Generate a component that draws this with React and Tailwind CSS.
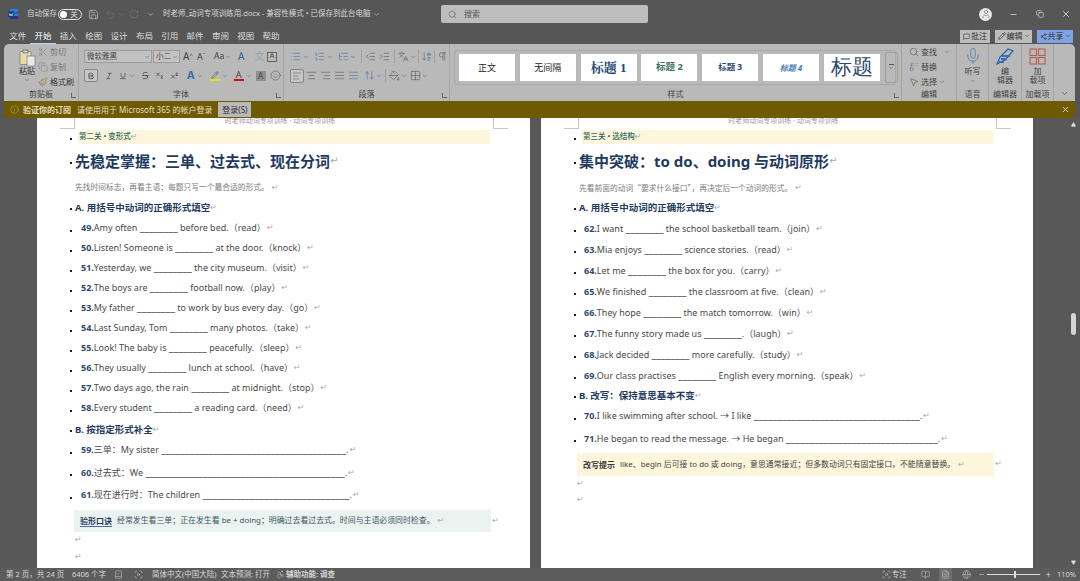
import React from "react";
import {
  Scissors, Copy, Paintbrush, Search, User, Minus, X, ChevronDown, Undo2, RotateCw, Save,
  Bold, Italic, Underline, Strikethrough, Subscript, Superscript, Smile, AlignLeft, AlignCenter, AlignRight,
  AlignJustify, List, ListOrdered, ListTree, IndentDecrease, IndentIncrease, Pilcrow, ArrowDownAZ, PaintBucket,
  Grid2x2, Replace, MousePointer2, Mic, MessageSquare, Pencil, Share2, Info, Triangle, BookOpen, FileText, Globe,
  Accessibility, Focus, ArrowUpDown, Languages, BookCheck,
} from "lucide-react";

const font = "font-['Noto_Sans','Noto_Sans_CJK_SC',sans-serif]";

const tabs = ["文件", "开始", "插入", "绘图", "设计", "布局", "引用", "邮件", "审阅", "视图", "帮助"];

const leftItems = [
  ["49.", "Amy often ________ before bed.（read）"],
  ["50.", "Listen! Someone is ________ at the door.（knock）"],
  ["51.", "Yesterday, we ________ the city museum.（visit）"],
  ["52.", "The boys are ________ football now.（play）"],
  ["53.", "My father ________ to work by bus every day.（go）"],
  ["54.", "Last Sunday, Tom ________ many photos.（take）"],
  ["55.", "Look! The baby is ________ peacefully.（sleep）"],
  ["56.", "They usually ________ lunch at school.（have）"],
  ["57.", "Two days ago, the rain ________ at midnight.（stop）"],
  ["58.", "Every student ________ a reading card.（need）"],
];

const rightItems = [
  ["62.", "I want ________ the school basketball team.（join）"],
  ["63.", "Mia enjoys ________ science stories.（read）"],
  ["64.", "Let me ________ the box for you.（carry）"],
  ["65.", "We finished ________ the classroom at five.（clean）"],
  ["66.", "They hope ________ the match tomorrow.（win）"],
  ["67.", "The funny story made us ________.（laugh）"],
  ["68.", "Jack decided ________ more carefully.（study）"],
  ["69.", "Our class practises ________ English every morning.（speak）"],
];

const Mark = ({ className = "" }) => (
  <span className={`text-[8px] leading-none text-[#a8a8a8] font-['DejaVu_Sans'] ${className}`}>↵</span>
);

const Bullet = ({ className = "" }) => <span className={`w-[2px] h-[2px] shrink-0 bg-[#222] ${className}`}></span>;

const Item = ({ n, text, h = "h-[20px]", ml }) => (
  <div className={`flex items-center ${h}`}>
    <Bullet className="mt-[5px]" />
    <span className={`${ml} text-[9px] font-bold text-[#2f4a6d]`}>{n}</span>
    <span className="text-[9px] text-[#4a4a4a] whitespace-pre">
      {text.split(/(_+)/).map((part, i) =>
        part.startsWith("_") ? <span key={i} className="text-[10.7px] leading-none">{part}</span> : part
      )}
    </span>
    <Mark className="ml-[1px]" />
  </div>
);

const Heading = ({ children, h }) => (
  <div className={`flex items-center ${h}`}>
    <Bullet className="mt-[2px] mr-[3px]" />
    <span className="text-[9.5px] font-bold text-[#1f3a5f]">{children}</span>
    <Mark />
  </div>
);

const PageTop = ({ band, title, sub, bandLeft }) => (
  <>
    <div className="flex h-[12px] justify-center">
      <span className="text-[7px] leading-[5px] text-[#999]">时老师动词专项训练 · 动词专项训练</span>
    </div>
    <div className="flex h-[14px] items-center">
      <Bullet className="mt-[4px]" />
      <div className={`h-full flex-1 flex items-center bg-[#fdf5dc] ${bandLeft}`}>
        <span className="text-[7.5px] font-medium text-[#2a6a60]">{band}</span>
        <Mark className="text-[6px]" />
      </div>
    </div>
    <div className="flex h-[34px] items-center">
      <Bullet className="mr-[3px] mt-[4px]" />
      <h1 className="text-[15px] font-bold text-[#1f3a5f]">{title}</h1>
      <Mark className="text-[10px]" />
    </div>
    <div className="flex h-[20px] items-center pl-[5px]">
      <span className="text-[7.75px] text-[#7a7a7a]">{sub}</span>
      <Mark className="ml-[3px]" />
    </div>
    <Heading h="h-[20px]">A. 用括号中动词的正确形式填空</Heading>
  </>
);

const Crop = ({ side, x }) => (
  <div className={`absolute top-0 h-[11px] w-[15px] border-b border-[#c8c8c8] ${side === "l" ? "border-r" : "border-l"} ${x}`}></div>
);

function LeftPage() {
  return (
    <div className="relative w-[493px] shrink-0 h-full bg-white pl-[33px] pr-[40px] overflow-hidden">
      <Crop side="l" x="left-[23px]" />
      <Crop side="r" x="left-[456px]" />
      <PageTop
        band="第二关 • 变形式"
        title="先稳定掌握：三单、过去式、现在分词"
        sub="先找时间标志，再看主语；每题只写一个最合适的形式。"
        bandLeft="ml-[6px] pl-[1px]"
      />
      {leftItems.map(([n, t]) => (
        <Item key={n} n={n} text={t} ml="ml-[9px]" />
      ))}
      <Heading h="h-[24px]">B. 按指定形式补全</Heading>
      <Item n="59." text="三单：My sister _______________________________________." h="h-[16px]" ml="ml-[9px]" />
      <Item n="60." text="过去式：We __________________________________________." h="h-[29px]" ml="ml-[9px]" />
      <Item n="61." text="现在进行时：The children _______________________________." h="h-[16px]" ml="ml-[9px]" />
      <div className="relative mt-[7px] ml-[4px] mr-[-1px] h-[22px] bg-[#eaf3ef] pl-[6px] flex items-center">
        <span className="text-[8px] font-bold text-[#1f3a5f] border-b border-[#4a6fa5] leading-[10px] mr-[5px]">验形口诀</span>
        <span className="text-[7.9px] text-[#3d5560]">经常发生看三单；正在发生看 be + doing；明确过去看过去式。时间与主语必须同时检查。</span>
        <Mark className="ml-[3px]" />
        <Mark className="absolute right-[-8px] top-[7px]" />
      </div>
      <div className="h-[16px] flex items-center pl-[5px]"><Mark /></div>
      <div className="h-[18px] flex items-center pl-[5px]"><Mark /></div>
    </div>
  );
}

function RightPage() {
  return (
    <div className="relative w-[492px] shrink-0 h-full bg-white pl-[33px] pr-[40px] overflow-hidden">
      <Crop side="l" x="left-[23px]" />
      <Crop side="r" x="left-[455px]" />
      <PageTop
        band="第三关 • 选结构"
        title="集中突破：to do、doing 与动词原形"
        sub={
          <>
            先看前面的动词<span className="font-['Noto_Sans_CJK_SC']">“</span>要求什么接口<span className="font-['Noto_Sans_CJK_SC']">”</span>，再决定后一个动词的形式。
          </>
        }
        bandLeft="ml-[6px] pl-[1px]"
      />
      {rightItems.map(([n, t]) => (
        <Item key={n} n={n} text={t} h="h-[21px]" ml="ml-[8px]" />
      ))}
      <Heading h="h-[20px]">B. 改写：保持意思基本不变</Heading>
      <Item n="70." text="I like swimming after school. → I like ___________________________________." ml="ml-[8px]" />
      <Item n="71." text="He began to read the message. → He began ________________________________." h="h-[25px]" ml="ml-[8px]" />
      <div className="relative mt-[2px] ml-[3px] mr-[-1px] h-[23px] bg-[#fdf5dc] pl-[6px] flex items-center">
        <span className="text-[8px] font-bold text-[#3a3a3a] mr-[5px]">改写提示</span>
        <span className="text-[7.9px] text-[#444]">like、begin 后可接 to do 或 doing，意思通常接近；但多数动词只有固定接口，不能随意替换。</span>
        <Mark className="ml-[3px]" />
        <Mark className="absolute right-[-8px] top-[7px]" />
      </div>
      <div className="h-[15px] flex items-center pl-[3px]"><Mark /></div>
      <div className="h-[18px] flex items-center pl-[3px]"><Mark /></div>
    </div>
  );
}

function WordLogo() {
  return (
    <svg width="10" height="10" viewBox="0 0 10 10">
      <rect x="2" y="0" width="8" height="10" rx="1" fill="#2f7fd6" />
      <rect x="2" y="3" width="8" height="2" fill="#1f5fb0" />
      <rect x="2" y="7" width="8" height="3" fill="#153f85" />
      <rect x="0" y="2.5" width="6" height="5.5" rx="0.5" fill="#0f3a7d" />
      <path d="M1 3.8 L2 7 L3 5 L4 7 L5 3.8" fill="none" stroke="#fff" strokeWidth="0.6" />
    </svg>
  );
}

function TitleBar() {
  return (
    <div className="flex h-[28px] items-center text-[#d8d8d8] text-[9px]">
      <div className="ml-[8px] w-[19px]"><WordLogo /></div>
      <span className="w-[31px] text-[7.5px]">自动保存</span>
      <div className="flex h-[11px] w-[24px] items-center rounded-full border border-[#e5e5e5] px-[1px]">
        <span className="h-[7px] w-[7px] rounded-full bg-white"></span>
        <span className="ml-[3px] text-[8px] leading-none">关</span>
      </div>
      <Save size={11} strokeWidth={1.2} className="ml-[6px]" />
      <Undo2 size={11} strokeWidth={1.2} className="ml-[6px] text-[#7c7c7c]" />
      <ChevronDown size={7} className="ml-[2px] text-[#7c7c7c]" />
      <RotateCw size={10} strokeWidth={1.2} className="ml-[4px] text-[#7c7c7c]" />
      <ChevronDown size={7} className="ml-[8px]" />
      <div className="ml-[9px] flex w-[278px] items-center text-[7.5px]">
        <span>时老师_动词专项训练用.docx  -  兼容性模式 • 已保存到此台电脑</span>
        <ChevronDown size={7} className="ml-[2px]" />
      </div>
      <div className="flex h-[18px] w-[207px] items-center rounded-[2px] bg-[#bdbdbd] pl-[7px] text-[#555]">
        <Search size={9} strokeWidth={1.4} />
        <span className="ml-[7px] text-[8px]">搜索</span>
      </div>
      <div className="ml-[331px] flex h-[13px] w-[13px] items-center justify-center rounded-full bg-[#e8e8e8] text-[#666]">
        <User size={10} strokeWidth={1.4} />
      </div>
      <Minus size={9} className="ml-[17px]" />
      <Copy size={8} className="ml-[18px]" />
      <X size={10} className="ml-[17px]" />
    </div>
  );
}

function TabRow() {
  return (
    <div className="flex h-[16px] items-center text-[8.5px] text-[#dcdcdc]">
      <div className="flex pl-[5px]">
        {tabs.map((t) => (
          <span key={t} className={`w-[25.35px] text-center leading-[14px] ${t === "开始" ? "border-b border-[#c4d4ec] text-white" : ""}`}>{t}</span>
        ))}
      </div>
      <div className="ml-auto flex items-center gap-[5px] pr-[7px] text-[#333]">
        <div className="flex h-[13px] w-[30px] items-center justify-center gap-[1px] bg-[#bdbdbd] text-[8px]"><MessageSquare size={7} />批注</div>
        <div className="flex h-[13px] w-[37px] items-center justify-center gap-[1px] bg-[#bdbdbd] text-[8px]"><Pencil size={8} />编辑<ChevronDown size={6} /></div>
        <div className="flex h-[13px] w-[36px] items-center justify-center gap-[1px] bg-[#7fa3e4] text-[8px]"><Share2 size={7} />共享<ChevronDown size={6} /></div>
      </div>
    </div>
  );
}

const Launcher = () => (
  <span className="absolute bottom-[3px] right-[2px] h-[5px] w-[5px] border-b border-l border-[#666]"></span>
);

const Group = ({ w, label, children, launcher = true }) => (
  <div className={`relative flex h-full shrink-0 flex-col border-r border-[#a4a4a4] ${w}`}>
    <div className="relative h-[44px] shrink-0">{children}</div>
    <span className="text-center text-[8px] leading-[11px] text-[#444]">{label}</span>
    {launcher && <Launcher />}
  </div>
);

const Caret = ({ className = "" }) => <ChevronDown size={6} strokeWidth={2} className={`shrink-0 text-[#555] ${className}`} />;

const ic = { size: 10, strokeWidth: 1.2 };

function Clipboard() {
  return (
    <div className="flex h-full pt-[5px]">
      <div className="ml-[12px] flex w-[22px] flex-col items-center">
        <svg width="17" height="18" viewBox="0 0 17 18" className="shrink-0">
          <rect x="1" y="2.5" width="11" height="13" rx="1" fill="#e8dcae" stroke="#8a7d55" strokeWidth="0.8" />
          <rect x="4" y="1" width="5" height="3" fill="#c9c9c9" stroke="#666" strokeWidth="0.7" />
          <rect x="8" y="7" width="8" height="10" fill="#e9e9e9" stroke="#777" strokeWidth="0.7" />
        </svg>
        <span className="mt-[-1px] text-[8px] leading-[10px] text-[#333]">粘贴</span>
        <Caret className="mt-[1px]" />
      </div>
      <div className="mt-[-3px] flex flex-col gap-[3px] text-[8px] leading-[12px] text-[#7a7a7a]">
        <div className="flex items-center gap-[2px]"><Scissors {...ic} />剪切</div>
        <div className="flex items-center gap-[2px]"><Copy {...ic} />复制</div>
        <div className="flex items-center gap-[2px] text-[#333]"><Paintbrush size={10} strokeWidth={1.3} className="text-[#9a6a20]" />格式刷</div>
      </div>
    </div>
  );
}

function FontGroup() {
  return (
    <div className="flex h-full flex-col pl-[5px] pt-[6px] text-[#444]">
      <div className="flex h-[13px] items-center">
        <div className="flex h-[13px] w-[68px] items-center justify-between border border-[#9c9c9c] bg-[#c2c2c2] pl-[2px] pr-[1px] text-[7.5px]">微软雅黑<Caret /></div>
        <div className="ml-[1px] flex h-[13px] w-[27px] items-center justify-between border border-[#9c9c9c] bg-[#c2c2c2] pl-[2px] pr-[1px] text-[7.5px]">小二<Caret /></div>
        <span className="ml-[3px] w-[14px] text-[10px]">A<sup className="text-[6px]">^</sup></span>
        <span className="w-[17px] text-[9px]">A<sup className="text-[6px]">ˇ</sup></span>
        <span className="flex w-[24px] items-center text-[8.5px]">Aa<Caret className="ml-[1px]" /></span>
        <span className="w-[14px] text-[10px] text-[#3a5f9a]">A</span>
        <span className="w-[15px] text-center text-[10px] text-[#8aa]">文</span>
        <span className="flex h-[10px] w-[10px] items-center justify-center border border-[#666] text-[7px]">A</span>
      </div>
      <div className="mt-[6px] flex h-[13px] items-center">
        <span className="flex h-[13px] w-[14px] items-center justify-center rounded-[2px] border border-[#888] bg-[#c6c6c6]"><Bold size={8} strokeWidth={2.4} /></span>
        <Italic size={8} className="ml-[7px]" />
        <Underline size={8} className="ml-[6px]" />
        <Caret className="ml-[2px]" />
        <Strikethrough size={9} className="ml-[6px]" />
        <Subscript size={9} className="ml-[5px]" />
        <Superscript size={9} className="ml-[6px]" />
        <span className="ml-[8px] text-[11px] font-bold text-[#3a6ea8]">A</span>
        <Caret className="ml-[2px]" />
        <div className="ml-[7px] flex w-[10px] flex-col items-center"><Pencil size={8} strokeWidth={1.5} /><span className="h-[2px] w-[10px] bg-[#e6e600]"></span></div>
        <Caret className="ml-[2px]" />
        <div className="ml-[6px] flex w-[10px] flex-col items-center"><span className="text-[9px] leading-[9px]">A</span><span className="h-[2px] w-[10px] bg-[#d01010]"></span></div>
        <Caret className="ml-[2px]" />
        <span className="ml-[4px] flex h-[10px] w-[10px] items-center justify-center bg-[#8e8e8e] text-[8px]">A</span>
        <Smile size={11} strokeWidth={1} className="ml-[4px]" />
      </div>
    </div>
  );
}

function ParaGroup() {
  const p = { size: 11, strokeWidth: 1.1 };
  return (
    <div className="flex h-full flex-col pl-[6px] pt-[6px] text-[#4a4a4a]">
      <div className="flex h-[13px] items-center">
        <List {...p} className="text-[#3f6a9a]" /><Caret className="ml-[2px]" />
        <ListOrdered {...p} className="ml-[5px] text-[#3f6a9a]" /><Caret className="ml-[2px]" />
        <ListTree {...p} className="ml-[5px] text-[#3f6a9a]" /><Caret className="ml-[1px]" />
        <span className="ml-[5px] h-[13px] border-l border-[#a0a0a0]"></span>
        <IndentDecrease {...p} className="ml-[3px]" />
        <IndentIncrease {...p} className="ml-[3px]" />
        <span className="ml-[4px] h-[13px] border-l border-[#a0a0a0]"></span>
        <Languages {...p} className="ml-[3px]" /><Caret className="ml-[1px]" />
        <span className="ml-[2px] h-[13px] border-l border-[#a0a0a0]"></span>
        <ArrowDownAZ {...p} className="ml-[2px] text-[#34598a]" />
        <span className="ml-[2px] h-[13px] border-l border-[#a0a0a0]"></span>
        <Pilcrow {...p} className="ml-[2px]" />
      </div>
      <div className="mt-[6px] flex h-[13px] items-center">
        <span className="flex h-[14px] w-[14px] items-center justify-center rounded-[2px] border border-[#888] bg-[#c6c6c6]"><AlignLeft size={10} strokeWidth={1.1} /></span>
        <AlignCenter {...p} className="ml-[2px]" />
        <AlignRight {...p} className="ml-[3px]" />
        <AlignJustify {...p} className="ml-[3px]" />
        <AlignJustify {...p} className="ml-[3px] text-[#3f6a9a]" />
        <ArrowUpDown {...p} className="ml-[5px] text-[#3f6a9a]" /><Caret className="ml-[1px]" />
        <span className="ml-[3px] h-[13px] border-l border-[#a0a0a0]"></span>
        <PaintBucket {...p} className="ml-[3px]" /><Caret className="ml-[1px]" />
        <Grid2x2 {...p} className="ml-[3px]" /><Caret className="ml-[1px]" />
      </div>
    </div>
  );
}

const styleCards = [
  ["正文", "text-[9px] text-[#222]"],
  ["无间隔", "text-[9px] text-[#222]"],
  ["标题 1", "font-['Liberation_Serif','Noto_Serif_CJK_SC',serif] text-[13px] font-bold text-[#24456e]"],
  ["标题 2", "text-[9.5px] font-bold text-[#3d7068]"],
  ["标题 3", "text-[8.5px] font-bold text-[#2d4a6a]"],
  ["标题 4", "text-[8px] italic font-bold text-[#4a7ab5]"],
  ["标题", "font-['Liberation_Serif',serif] text-[21px] text-[#2c4a70]"],
];

function Styles() {
  return (
    <div className="ml-[4px] mt-[6px] flex h-[35px] w-[442px] items-center gap-[4.8px] rounded-[3px] border border-[#a8a8a8] pl-[4px]">
      {styleCards.map(([t, c]) => (
        <div key={t} className={`flex h-[27px] w-[56px] shrink-0 items-center justify-center bg-white ${c}`}>{t}</div>
      ))}
      <div className="flex h-[31px] w-[13px] shrink-0 flex-col items-center justify-center rounded-[2px] border border-[#a0a0a0]">
        <span className="w-[5px] border-t border-[#555]"></span>
        <Caret />
      </div>
    </div>
  );
}

function Ribbon() {
  return (
    <div className="relative z-10 ml-[4px] mr-[5px] flex h-[57px] rounded-t-[5px] bg-[#b9b9b9] text-[8px]">
      <Group w="w-[75px]" label="剪贴板"><Clipboard /></Group>
      <Group w="w-[205px]" label="字体"><FontGroup /></Group>
      <Group w="w-[166px]" label="段落"><ParaGroup /></Group>
      <Group w="w-[452px]" label="样式"><Styles /></Group>
      <Group w="w-[55px]" label="编辑" launcher={false}>
        <div className="flex flex-col gap-[3px] pl-[7px] pt-[2px] text-[8px] leading-[12px] text-[#444]">
          <div className="flex items-center gap-[2px]"><Search size={10} strokeWidth={1.2} />查找<Caret className="ml-[5px]" /></div>
          <div className="flex items-center gap-[2px]"><Replace size={10} strokeWidth={1.2} className="text-[#3f6a9a]" />替换</div>
          <div className="flex items-center gap-[2px]"><MousePointer2 size={10} strokeWidth={1.2} />选择<Caret /></div>
        </div>
      </Group>
      <Group w="w-[32px]" label="语音" launcher={false}>
        <div className="flex flex-col items-center pt-[3px] text-[#444]">
          <Mic size={18} strokeWidth={1.2} className="text-[#5a7fb5]" />
          <span className="mt-[1px] leading-[10px]">听写</span>
          <Caret className="mt-[2px]" />
        </div>
      </Group>
      <Group w="w-[33px]" label="编辑器" launcher={false}>
        <div className="flex flex-col items-center pt-[4px] text-[#444]">
          <svg width="18" height="17" viewBox="0 0 18 17">
            <path d="M1 16 L4 9 L12 1 L17 3 L9 12 Z" fill="none" stroke="#2f5fa5" strokeWidth="1.2" />
            <path d="M6 8 H14 M5 11 H11 M3 14 H8" stroke="#2f6fc0" strokeWidth="2" />
          </svg>
          <span className="mt-[1px] leading-[9px]">编</span>
          <span className="leading-[9px]">辑器</span>
        </div>
      </Group>
      <Group w="w-[32px]" label="加载项" launcher={false}>
        <div className="flex flex-col items-center pt-[4px] text-[#444]">
          <svg width="17" height="17" viewBox="0 0 17 17" fill="none" stroke="#b8604a" strokeWidth="1.1">
            <rect x="1" y="1" width="6.5" height="6.5" />
            <rect x="9.5" y="1" width="6.5" height="6.5" />
            <rect x="1" y="9.5" width="6.5" height="6.5" />
            <rect x="9.5" y="9.5" width="6.5" height="6.5" />
          </svg>
          <span className="mt-[1px] leading-[9px]">加</span>
          <span className="leading-[9px]">载项</span>
        </div>
      </Group>
      <div className="flex flex-1 items-end justify-center pb-[3px] text-[#555]"><ChevronDown size={9} /></div>
    </div>
  );
}

function Notice() {
  return (
    <div className="relative z-10 ml-[4px] mr-[5px] flex h-[17px] items-center rounded-b-[5px] bg-[#6e5a00] pl-[6px] pr-[5px] text-[8px] text-[#e6dfc0]">
      <Info size={9} strokeWidth={1.2} className="text-[#c2c68a]" />
      <span className="ml-[4px] font-bold">验证你的订阅</span>
      <span className="ml-[6px]">请使用用于 Microsoft 365 的帐户登录</span>
      <span className="ml-[6px] flex h-[15px] w-[33px] items-center justify-center bg-[#b9b9b9] text-[#333]">登录(S)</span>
      <X size={9} className="ml-auto text-[#eee]" />
    </div>
  );
}

function ScrollBar() {
  return (
    <div className="relative ml-[31px] flex w-[15px] flex-col items-center">
      <Triangle size={5} fill="#ddd" stroke="#ddd" className="mt-[4px] ml-[3px]" />
      <span className="ml-[3px] mt-[186px] h-[22px] w-[5px] rounded-[3px] bg-[#d4d4d4]"></span>
      <Triangle size={5} fill="#ddd" stroke="#ddd" className="ml-[3px] mt-auto mb-[3px] rotate-180" />
    </div>
  );
}

function StatusBar() {
  return (
    <div className="flex h-[13px] items-center bg-[#5c5c5c] pl-[6px] pr-[4px] text-[7.5px] text-[#d8d8d8]">
      <span className="w-[66px]">第 2 页，共 24 页</span>
      <span className="w-[41px]">6406 个字</span>
      <BookCheck size={9} strokeWidth={1.2} className="ml-[1px]" />
      <Focus size={9} strokeWidth={1.2} className="ml-[11px]" />
      <span className="ml-[9px] w-[69px]">简体中文(中国大陆)</span>
      <span className="w-[55px]">文本预测: 打开</span>
      <Accessibility size={9} strokeWidth={1.2} />
      <span className="ml-[1px] font-bold">辅助功能: 调查</span>
      <div className="ml-auto flex items-center">
        <Focus size={9} strokeWidth={1.2} />
        <span className="ml-[1px]">专注</span>
        <BookOpen size={9} strokeWidth={1.2} className="ml-[14px]" />
        <span className="ml-[9px] flex h-[13px] w-[13px] items-center justify-center bg-[#6e6e6e]"><FileText size={9} strokeWidth={1.2} /></span>
        <Globe size={9} strokeWidth={1.2} className="ml-[10px]" />
        <Minus size={7} className="ml-[7px]" />
        <div className="ml-[2px] flex w-[53px] items-center">
          <span className="w-[27px] border-t border-[#ddd]"></span>
          <span className="h-[7px] w-[2px] bg-[#ddd]"></span>
          <span className="flex-1 border-t border-[#ddd]"></span>
        </div>
        <span className="ml-[6px] text-[9px]">+</span>
        <span className="ml-[6px]">110%</span>
      </div>
    </div>
  );
}

export default function App() {
  return (
    <div className={`flex h-[581px] w-[1080px] flex-col overflow-hidden whitespace-nowrap bg-[#555655] ${font}`}>
      <TitleBar />
      <TabRow />
      <Ribbon />
      <Notice />
      <div className="flex h-[450px] bg-[#585858] pl-[37px]">
        <LeftPage />
        <div className="w-[11px] shrink-0"></div>
        <RightPage />
        <ScrollBar />
      </div>
      <StatusBar />
    </div>
  );
}
